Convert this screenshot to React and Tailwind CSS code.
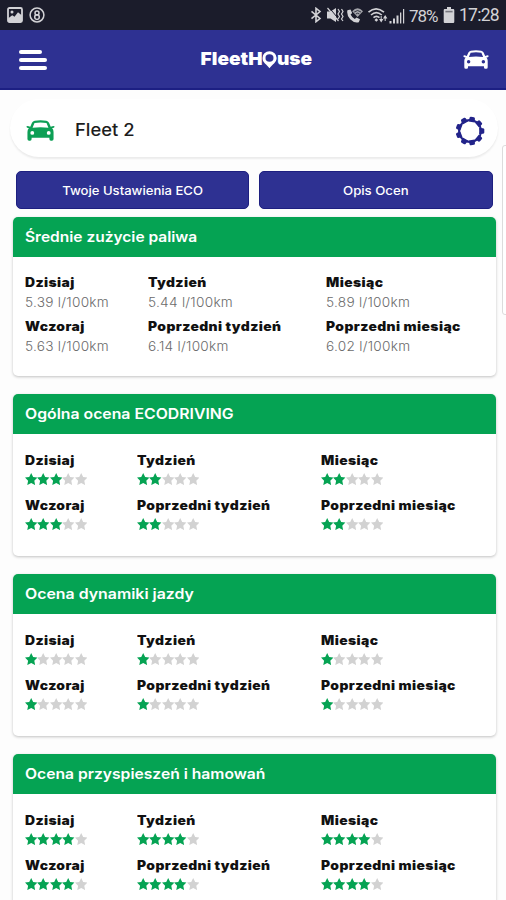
const sections = [
    { title: 'Ogólna ocena ECODRIVING', stretch: 'scale-x-[1.09]', current: [3, 2, 2], previous: [3, 2, 2] },
    { title: 'Ocena dynamiki jazdy', stretch: 'scale-x-[1.095]', current: [1, 1, 1], previous: [1, 1, 1] },
    { title: 'Ocena przyspieszeń i hamowań', stretch: 'scale-x-[1.08]', current: [4, 4, 4], previous: [4, 4, 4] },
];

const currentLabels = ['Dzisiaj', 'Tydzień', 'Miesiąc'];
const previousLabels = ['Wczoraj', 'Poprzedni tydzień', 'Poprzedni miesiąc'];

function CarIcon({ className }) {
    return (
        <svg viewBox="0 0 30 22" preserveAspectRatio="none" fill="currentColor" className={className}>
            <path
                fillRule="evenodd"
                d="M9 0.8Q15 -0.3 21 0.8Q23 1.2 23.8 3L25.6 7L28.2 6.2Q29.8 6.3 29.5 7.4Q29.2 8.3 27 8.7Q28.5 10.2 28.5 12.5V20Q28.5 21.8 26.8 21.8H25.8Q24.2 21.8 24.2 20V18.7H5.8V20Q5.8 21.8 4.2 21.8H3.2Q1.5 21.8 1.5 20V12.5Q1.5 10.2 3 8.7Q0.8 8.3 0.5 7.4Q0.2 6.3 1.8 6.2L4.4 7L6.2 3Q7 1.2 9 0.8ZM8.8 3.2L6.8 8.2Q15 7 23.2 8.2L21.2 3.2Q15 2.2 8.8 3.2ZM6.5 11.5A2 2 0 1 0 6.5 15.5A2 2 0 1 0 6.5 11.5ZM23.5 11.5A2 2 0 1 0 23.5 15.5A2 2 0 1 0 23.5 11.5Z"
            />
        </svg>
    );
}

function GearIcon() {
    const teeth = [10, 50, 90, 130, 170, 210, 250, 290, 330];

    return (
        <svg viewBox="0 0 30 30" className="h-[30px] w-[30px] text-[#22238a]">
            <circle cx="15" cy="15" r="11" fill="none" stroke="currentColor" strokeWidth="1.9" />
            {teeth.map((angle) => (
                <path
                    key={angle}
                    d="M11.9 5.8L12.3 1.8Q12.5 0.7 13.5 0.7H16.5Q17.5 0.7 17.7 1.8L18.1 5.8Z"
                    fill="currentColor"
                    transform={`rotate(${angle} 15 15)`}
                />
            ))}
        </svg>
    );
}

function Stars({ value }) {
    return (
        <div className="mt-[3px] flex h-[13px] items-center">
            {[1, 2, 3, 4, 5].map((n) => (
                <svg
                    key={n}
                    viewBox="0 0 24 24"
                    fill="currentColor"
                    className={n <= value ? 'h-[12.4px] w-[12.4px] text-[#05a353]' : 'h-[12.4px] w-[12.4px] text-[#d2d2d2]'}
                >
                    <path d="M12 0L15.8 7.6L24 8.8L18 14.8L19.6 23.4L12 19.4L4.4 23.4L6 14.8L0 8.8L8.2 7.6Z" />
                </svg>
            ))}
        </div>
    );
}

function Label({ children }) {
    return (
        <div className="h-5 w-max origin-left scale-x-[1.11] pt-px text-[12.5px] font-black leading-5 tracking-[0.35px] text-[#111]">
            {children}
        </div>
    );
}

function Card({ title, stretch, className, children }) {
    return (
        <section className={`ml-[13px] w-[483px] rounded-[5px] bg-white shadow-[0_1px_3px_rgba(0,0,0,0.24)] ${className}`}>
            <h2 className="h-[39.5px] rounded-t-[5px] bg-[#05a353] pl-3 text-[14.5px] font-semibold leading-[40px] text-white">
                <span className={`inline-block origin-left ${stretch}`}>{title}</span>
            </h2>
            {children}
        </section>
    );
}

function StatusBar() {
    return (
        <div className="flex h-[30px] items-center justify-between bg-[#1b1c2b] pl-[7px] pr-[7px] text-[#d2d2d6]">
            <div className="flex items-center gap-[6px]">
                <svg viewBox="0 0 16 16" className="h-4 w-4">
                    <rect x="1" y="1" width="14" height="14" rx="1.5" fill="none" stroke="currentColor" strokeWidth="1.8" />
                    <circle cx="5" cy="5" r="1.5" fill="currentColor" />
                    <path d="M1 11.5L5.2 8.3L7.5 9.8L11 5.2L15 8.6V14H1Z" fill="currentColor" />
                </svg>
                <svg viewBox="0 0 16 16" className="h-4 w-4" fill="none" stroke="currentColor" strokeWidth="1.5">
                    <circle cx="8" cy="8" r="6.9" />
                    <circle cx="8" cy="5.9" r="2" />
                    <circle cx="8" cy="10.1" r="2.3" />
                </svg>
            </div>
            <div className="flex items-center">
                <svg viewBox="0 0 12 16" className="h-4 w-3" fill="none" stroke="currentColor" strokeWidth="1.6">
                    <path d="M1.5 4.3L10 11.5L6 14.7V1.3L10 4.5L1.5 11.7" />
                </svg>
                <svg viewBox="0 0 18 16" className="ml-[4px] h-4 w-[18px]" fill="currentColor">
                    <path d="M1 4.5H4.5L10 1V15L4.5 11.5H1Z" />
                    <path d="M3 0.5L13.5 13" stroke="#1b1c2b" strokeWidth="1" />
                    <path d="M1.5 1L12.5 14M12 2L13.5 4.5L12 7L13.5 9.5L12 12M15.5 2L17 4.5L15.5 7L17 9.5L15.5 12L17 14" fill="none" stroke="currentColor" strokeWidth="1.2" />
                </svg>
                <svg viewBox="0 0 18 16" className="ml-[2px] h-4 w-[18px]" fill="currentColor">
                    <path d="M1.4 3.2L4.5 2.4L6.2 6L4.6 7.5Q6 10.6 8.8 12L10.5 10.4L14 12.2L12.8 15.2Q8.5 16.6 4.2 12.3Q0.4 8 1.4 3.2Z" />
                    <path d="M6.2 4.3Q11.5 -1.8 17 4.3L11.6 10Z" opacity="0.75" />
                    <path d="M8.2 5Q11.6 2 15 5M9.8 7Q11.6 5.4 13.4 7" fill="none" stroke="#1b1c2b" strokeWidth="0.8" />
                </svg>
                <svg viewBox="0 0 22 18" className="ml-[3px] h-[18px] w-[22px]" fill="none" stroke="currentColor" strokeWidth="1.6">
                    <path d="M1.5 6.2Q9 -0.5 17 6.2M4 9Q9.2 4.2 14.8 9M6.5 11.7Q9.3 9 12.5 11.7" />
                    <path d="M9.3 12.2L11.2 14L9.3 15.8L7.5 14Z" fill="currentColor" stroke="none" />
                    <path d="M14.2 10V15M18.2 15V10" strokeWidth="1" />
                    <path d="M12 13H16.4L14.2 16.5ZM16 12.5H20.4L18.2 9Z" fill="currentColor" stroke="none" />
                </svg>
                <svg viewBox="0 0 16 16" className="mt-px h-4 w-4" fill="currentColor">
                    <path d="M0.5 13H2.5V15.5H0.5ZM4 10.5H6V15.5H4ZM7.5 7.5H9.5V15.5H7.5ZM11 4.5H12.3V15.5H11ZM14 1H15.2V15.5H14Z" />
                </svg>
                <span className="ml-[4px] mt-[2px] w-[31px] whitespace-nowrap font-[Roboto] text-[17px] leading-none tracking-[-1px]">78%</span>
                <svg viewBox="0 0 12 16" className="ml-[3px] h-4 w-3" fill="currentColor">
                    <path d="M4 0H8V2H10.2Q11.3 2 11.3 3.2V14.7Q11.3 16 10.2 16H1.8Q0.7 16 0.7 14.7V3.2Q0.7 2 1.8 2H4Z" />
                    <path d="M2.4 3.8H9.6V5.4H2.4Z" fill="#77777f" />
                </svg>
                <span className="ml-[4px] mt-[2px] font-[Roboto] text-[17.5px] leading-none tracking-[-0.7px]">17:28</span>
            </div>
        </div>
    );
}

function Header() {
    return (
        <header className="grid h-[60px] grid-cols-3 items-center border-b-2 border-[#1c1f83] bg-[#2e3192] pl-[19px] pr-[17px] text-white">
            <div className="mt-[2px] flex flex-col gap-[4px]">
                <span className="h-[4px] w-[23px] rounded-full bg-white" />
                <span className="h-[4px] w-[28px] rounded-full bg-white" />
                <span className="h-[4px] w-[28px] rounded-full bg-white" />
            </div>
            <div className="ml-[4px] flex scale-x-[1.06] items-center justify-center whitespace-nowrap text-[18px] font-black leading-none">
                <span>FleetH</span>
                <svg viewBox="0 0 14 18" className="mt-[2px] h-[18px] w-[13.5px]">
                    <path
                        fillRule="evenodd"
                        fill="currentColor"
                        d="M7 0A7 7 0 0 1 14 7C14 11.3 9.5 14.2 7 17.5C4.5 14.2 0 11.3 0 7A7 7 0 0 1 7 0ZM7 3A3.9 3.9 0 1 0 7 10.8A3.9 3.9 0 1 0 7 3Z"
                    />
                </svg>
                <span>use</span>
            </div>
            <CarIcon className="h-[19px] w-[26px] justify-self-end" />
        </header>
    );
}

export default function App() {
    return (
        <div className="relative h-[900px] w-[506px] overflow-hidden bg-[#fdfdfd] font-['Inter',sans-serif]">
            <StatusBar />
            <Header />

            {/* Selected vehicle */}
            <div className="ml-[10px] mt-[9px] flex h-[58px] w-[488px] items-center rounded-[29px] bg-white pl-4 pr-[13px] shadow-[0_2px_2px_rgba(0,0,0,0.07)]">
                <CarIcon className="mt-[5px] h-[21px] w-[29px] text-[#0d9f55]" />
                <span className="ml-5 mt-[6px] flex-1">
                    <span className="inline-block origin-left scale-x-[1.08] text-[17px] font-medium text-[#1d1d1d]">Fleet 2</span>
                </span>
                <div className="mt-[5px]">
                    <GearIcon />
                </div>
            </div>

            <div className="mt-[14px] flex gap-[10px] pl-[15.5px] text-[12px] font-medium text-white">
                <button className="h-[37.5px] w-[233.5px] rounded-[5px] border border-[#1d1f80] bg-[#2e3192]">
                    <span className="mt-[2px] inline-block scale-x-[1.09]">Twoje Ustawienia ECO</span>
                </button>
                <button className="h-[37.5px] w-[233.5px] rounded-[5px] border border-[#1d1f80] bg-[#2e3192]">
                    <span className="mt-[2px] inline-block scale-x-[1.1]">Opis Ocen</span>
                </button>
            </div>

            {/* Fuel usage */}
            <Card title="Średnie zużycie paliwa" stretch="scale-x-[1.07]" className="mt-[8.5px] h-[159px]">
                <div className="grid grid-cols-[123px_178px_1fr] gap-y-[3px] pl-3 pt-[15px]">
                    {[
                        ['Dzisiaj', '5.39 l/100km'],
                        ['Tydzień', '5.44 l/100km'],
                        ['Miesiąc', '5.89 l/100km'],
                        ['Wczoraj', '5.63 l/100km'],
                        ['Poprzedni tydzień', '6.14 l/100km'],
                        ['Poprzedni miesiąc', '6.02 l/100km'],
                    ].map(([label, value]) => (
                        <div key={label} className="h-[41px]">
                            <Label>{label}</Label>
                            <div className="w-max origin-left scale-x-[1.05] text-[13px] font-light leading-[21px] tracking-[0.25px] text-[#6b6b6b]">
                                {value}
                            </div>
                        </div>
                    ))}
                </div>
            </Card>

            {/* Ratings */}
            {sections.map((section) => (
                <Card key={section.title} title={section.title} stretch={section.stretch} className="mt-[18px] h-[162px]">
                    <div className="grid grid-cols-[112px_184px_1fr] pl-3 pt-4">
                        {currentLabels.map((label, i) => (
                            <div key={label} className="h-[45px]">
                                <Label>{label}</Label>
                                <Stars value={section.current[i]} />
                            </div>
                        ))}
                        {previousLabels.map((label, i) => (
                            <div key={label} className="h-[45px]">
                                <Label>{label}</Label>
                                <Stars value={section.previous[i]} />
                            </div>
                        ))}
                    </div>
                </Card>
            ))}

            {/* Scroll thumb */}
            <div className="absolute right-[-4px] top-[145px] h-[170px] w-2 rounded-[3px] border border-[#dcdcdc] bg-white" />
        </div>
    );
}
